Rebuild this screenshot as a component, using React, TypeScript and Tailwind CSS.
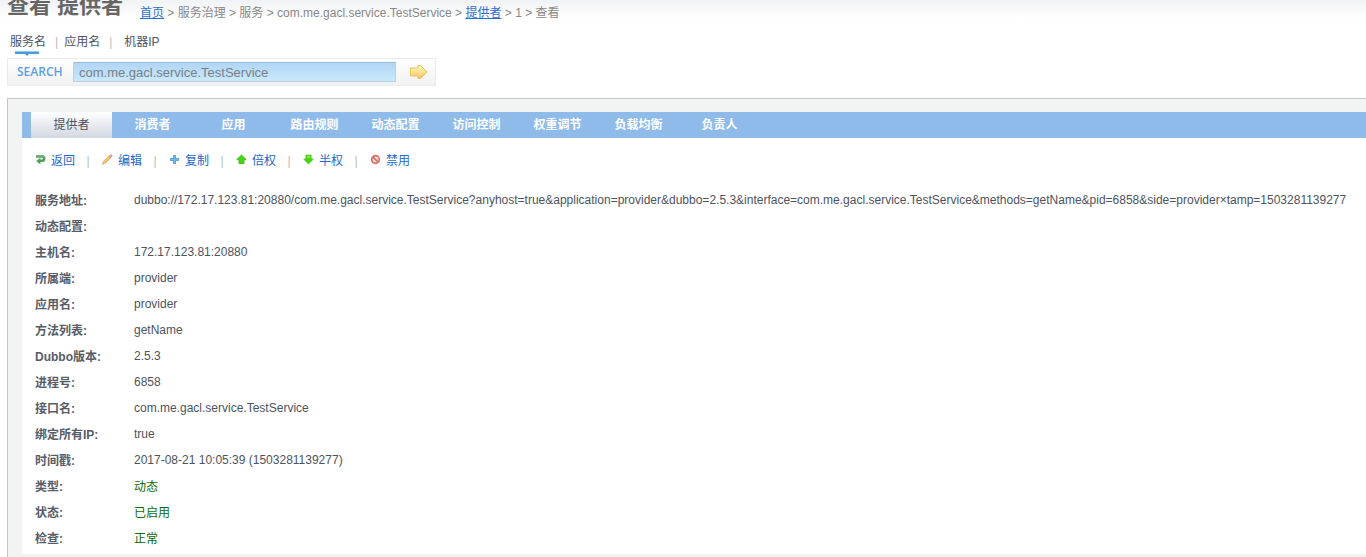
import type { ReactNode } from "react";

const scopes = ["服务名", "应用名", "机器IP"];

const tabs = ["提供者", "消费者", "应用", "路由规则", "动态配置", "访问控制", "权重调节", "负载均衡", "负责人"];

function BackIcon() {
  return (
    <svg width="11" height="11" viewBox="0 0 11 11" aria-hidden="true">
      <path d="M1 2.4h6a2.2 2.2 0 0 1 0 4.4H4.6" fill="none" stroke="#4f9f5c" strokeWidth="2.6" />
      <path d="M1 1.9h6a2.6 2.6 0 0 1 2.3 1.6" fill="none" stroke="#8cc796" strokeWidth="1" />
      <path d="M5.4 3.8v6.6L1.2 7z" fill="#4f9f5c" />
    </svg>
  );
}

function PencilIcon() {
  return (
    <svg width="11" height="11" viewBox="0 0 11 11" aria-hidden="true">
      <path d="M1.8 8.9 8.2 2.5" stroke="#d59a45" strokeWidth="3" />
      <path d="M1.8 8.6 8 2.4" stroke="#f9cf70" strokeWidth="1.8" />
      <path d="M8.2 2.6 9.2 1.6" stroke="#d9a08f" strokeWidth="2.6" strokeLinecap="round" />
      <path d="M.3 10.4 1 7.6l2.2 2.1z" fill="#e3c08a" />
      <path d="M.2 10.6.6 9.2l1 .9z" fill="#666" />
    </svg>
  );
}

function PlusIcon() {
  return (
    <svg width="11" height="11" viewBox="0 0 11 11" aria-hidden="true">
      <path d="M5.5 1v9M1 5.5h9" stroke="#5fa9dc" strokeWidth="3" />
      <path d="M5.5 2v7M2 5.5h7" stroke="#74b6e4" strokeWidth="1" />
    </svg>
  );
}

function UpIcon() {
  return (
    <svg width="11" height="11" viewBox="0 0 11 11" aria-hidden="true">
      <path d="M5.5 1 10.2 5.6H8v3.9H3v-3.9H.8z" fill="#43d80c" stroke="#49bd25" strokeWidth="1" strokeLinejoin="round" />
    </svg>
  );
}

function DownIcon() {
  return (
    <svg width="11" height="11" viewBox="0 0 11 11" aria-hidden="true">
      <path d="M5.5 9.8 10.2 5.2H8V1.2H3v4H.8z" fill="#43d80c" stroke="#49bd25" strokeWidth="1" strokeLinejoin="round" />
      <path d="M3.8 1.8h3.4v2.4H3.8z" fill="#8ce63a" />
    </svg>
  );
}

function BanIcon() {
  return (
    <svg width="11" height="11" viewBox="0 0 11 11" aria-hidden="true">
      <circle cx="5.5" cy="5.5" r="3.8" fill="#fbe3e0" stroke="#dc6c62" strokeWidth="1.7" />
      <path d="m3 3.2 5 4.6" stroke="#dc6c62" strokeWidth="1.6" />
    </svg>
  );
}

const actions: { label: string; icon: ReactNode }[] = [
  { label: "返回", icon: <BackIcon /> },
  { label: "编辑", icon: <PencilIcon /> },
  { label: "复制", icon: <PlusIcon /> },
  { label: "倍权", icon: <UpIcon /> },
  { label: "半权", icon: <DownIcon /> },
  { label: "禁用", icon: <BanIcon /> },
];

const details: { label: string; value: string; good?: boolean }[] = [
  {
    label: "服务地址:",
    value:
      "dubbo://172.17.123.81:20880/com.me.gacl.service.TestService?anyhost=true&application=provider&dubbo=2.5.3&interface=com.me.gacl.service.TestService&methods=getName&pid=6858&side=provider×tamp=1503281139277",
  },
  { label: "动态配置:", value: "" },
  { label: "主机名:", value: "172.17.123.81:20880" },
  { label: "所属端:", value: "provider" },
  { label: "应用名:", value: "provider" },
  { label: "方法列表:", value: "getName" },
  { label: "Dubbo版本:", value: "2.5.3" },
  { label: "进程号:", value: "6858" },
  { label: "接口名:", value: "com.me.gacl.service.TestService" },
  { label: "绑定所有IP:", value: "true" },
  { label: "时间戳:", value: "2017-08-21 10:05:39 (1503281139277)" },
  { label: "类型:", value: "动态", good: true },
  { label: "状态:", value: "已启用", good: true },
  { label: "检查:", value: "正常", good: true },
];

export default function App() {
  return (
    <div className="flex min-h-screen flex-col overflow-x-hidden bg-white pl-[7px] font-['Liberation_Sans','Noto_Sans_CJK_SC',sans-serif] text-xs text-[#4d5360]">
      <header className="-ml-[7px] flex h-[26px] items-start overflow-hidden bg-linear-to-b from-[#f1f2f5] to-white to-70% pl-[7px]">
        <h1 className="-mt-2 w-[133px] shrink-0 text-[22px] leading-7 font-bold whitespace-nowrap text-[#666]">查看 提供者</h1>
        <nav aria-label="面包屑" className="pt-1 leading-[18px] whitespace-nowrap text-[#888]">
          <a href="#home" className="text-[#2a6fd0] underline">首页</a>
          {" > 服务治理 > 服务 > com.me.gacl.service.TestService > "}
          <a href="#providers" className="text-[#2a6fd0] underline">提供者</a>
          {" > 1 > 查看"}
        </nav>
      </header>

      <div className="flex h-8 items-start gap-[9px] pt-[7px] pl-[3px] leading-[18px]">
        {scopes.map((name, i) => (
          <div key={name} className="flex gap-1.5">
            {i > 0 && <span className="text-[#bbb]">|</span>}
            <button type="button" className={i === 2 ? "pl-1.5" : ""}>
              {name}
              {i === 0 && (
                <svg className="ml-[5px] block" width="24" height="5" viewBox="0 0 24 5" aria-hidden="true">
                  <path d="M0 0h24v3H14l-2 2-2-2H0z" fill="#4b9add" />
                  <path d="M0 0h24v1H0z" fill="#93c7ef" />
                </svg>
              )}
            </button>
          </div>
        ))}
      </div>

      <form
        onSubmit={(e) => e.preventDefault()}
        className="flex h-7 w-[429px] items-center border border-[#ebebeb] bg-linear-to-b from-white to-[#f1f1f1] pl-[9px]"
      >
        <label htmlFor="search" className="w-14 font-['Open_Sans',sans-serif] text-xs font-semibold text-[#5a9fe2]">
          SEARCH
        </label>
        <input
          id="search"
          type="text"
          defaultValue="com.me.gacl.service.TestService"
          className="h-5 w-[323px] border border-[#b4d3e8] border-t-[#98bbdc] bg-linear-to-b from-[#b1d5f5] to-[#caeafb] px-[5px] text-[13px] text-[#777f88] outline-none"
        />
        <button type="submit" aria-label="搜索" className="ml-[13px]">
          <svg width="19" height="16" viewBox="0 0 19 16" className="block" aria-hidden="true">
            <defs>
              <linearGradient id="gold" x1="0" y1="0" x2="0" y2="1">
                <stop offset="0" stopColor="#fffbc0" />
                <stop offset=".5" stopColor="#fce18a" />
                <stop offset="1" stopColor="#f8ba72" />
              </linearGradient>
            </defs>
            <path d="M1.5 4h7.5V1.5h2.5L18 8l-6.500 6.500H9V12H1.500z" fill="url(#gold)" stroke="#e9c35c" strokeLinejoin="round" />
          </svg>
        </button>
      </form>

      <main className="mt-3 flex-1 border-t border-l border-[#c6c6c6] bg-[#f2f4f4] pt-[13px] pl-3.5">
        <section className="bg-white pb-[3px]">
          <nav aria-label="服务" className="flex h-[26px] bg-[#8fbbeb] pl-[9px]">
            {tabs.map((name, i) => (
              <a
                key={name}
                href="#tab"
                aria-current={i === 0 ? "page" : undefined}
                className={
                  i === 0
                    ? "w-[81px] bg-linear-to-b from-white to-[#d3d7e0] text-center leading-[26px]"
                    : "w-[81px] text-center leading-[26px] font-bold text-white"
                }
              >
                {name}
              </a>
            ))}
          </nav>

          <div className="flex h-[49px] items-start pt-3.5 pl-[13px] leading-[18px]">
            {actions.map(({ label, icon }, i) => (
              <div key={label} className="flex">
                {i > 0 && <span className="w-7 text-center text-[#bbb]">|</span>}
                <button type="button" className="flex w-[39px] gap-[5px] whitespace-nowrap text-[#2566c8]">
                  <span className="shrink-0 pt-0.5">{icon}</span>
                  {label}
                </button>
              </div>
            ))}
          </div>

          <table className="w-full table-fixed border-collapse text-left whitespace-nowrap">
            <tbody>
              {details.map(({ label, value, good }) => (
                <tr key={label} className="h-[26px]">
                  <th scope="row" className="w-28 pt-0.5 pl-[13px] font-bold text-[#565c68]">{label}</th>
                  <td className={good ? "pt-0.5 text-[#0c6a0c]" : "text-[#4d5360]"}>{value}</td>
                </tr>
              ))}
            </tbody>
          </table>
        </section>
      </main>
    </div>
  );
}
